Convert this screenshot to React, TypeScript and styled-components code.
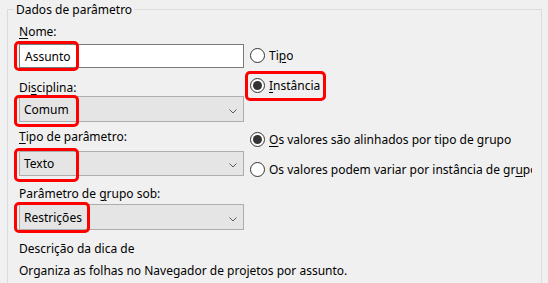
import styled, { createGlobalStyle } from "styled-components";

const GlobalStyle = createGlobalStyle`
  html, body {
    margin: 0;
    padding: 0;
    background: #f0f0f0;
  }
  body {
    width: 548px;
    height: 283px;
    overflow: hidden;
    font-family: "Noto Sans", "Segoe UI", sans-serif;
    font-size: 12px;
    color: #000;
  }
  u {
    text-decoration-thickness: 1px;
    text-underline-offset: 2px;
  }
`;

// the group box runs on past the bottom of the window, so no bottom edge
const Group = styled.fieldset`
  margin: 2px 0 0 7px;
  width: 535px;
  min-inline-size: 0;
  height: 281px;
  box-sizing: border-box;
  border: 1px solid #dcdcdc;
  border-bottom: none;
  padding: 0 0 0 11px;
  overflow: hidden;
`;

const Legend = styled.legend`
  margin-left: -5px;
  padding: 0 2px;
  line-height: 15px;
`;

const Columns = styled.div`
  display: flex;
  gap: 1px;
  width: 100%;
  min-width: 0;
`;

const LeftCol = styled.div`
  width: 225px;
  flex: none;
  display: flex;
  flex-direction: column;
`;

// clips the long radio label the way the dialog does
const RightCol = styled.div`
  flex: 1 1 0;
  width: 0;
  min-width: 0;
  margin-right: 9px;
  padding-left: 5px;
  overflow: hidden;
  display: flex;
  flex-direction: column;
`;

const Label = styled.div<{ $top: number }>`
  margin-top: ${(p) => p.$top}px;
  line-height: 15px;
  height: 15px;
  white-space: nowrap;
`;

const Field = styled.div<{ $top: number }>`
  position: relative;
  margin-top: ${(p) => p.$top}px;
`;

const TextBox = styled.div`
  height: 24px;
  box-sizing: border-box;
  border: 1px solid #7a7a7a;
  background: #fff;
  padding-left: 5px;
  display: flex;
  align-items: center;
`;

const Combo = styled.div<{ $h: number }>`
  height: ${(p) => p.$h}px;
  box-sizing: border-box;
  border: 1px solid #adadad;
  background: #e5e5e5;
  padding: 0 6px 0 4px;
  display: flex;
  align-items: center;
  justify-content: space-between;
`;

const Chevron = styled.svg`
  margin-top: 4px;
`;

const Highlight = styled.div<{ $x: number; $y: number; $w: number; $h: number }>`
  position: absolute;
  left: ${(p) => p.$x}px;
  top: ${(p) => p.$y}px;
  width: ${(p) => p.$w}px;
  height: ${(p) => p.$h}px;
  box-sizing: border-box;
  border: 3px solid #f00;
  border-radius: 5px;
  pointer-events: none;
`;

const RadioRow = styled.div<{ $top: number }>`
  position: relative;
  margin-top: ${(p) => p.$top}px;
  height: 17px;
  min-width: 0;
  display: flex;
  align-items: center;
  gap: 4px;
`;

const Circle = styled.span<{ $on?: boolean }>`
  flex: none;
  width: 15px;
  height: 15px;
  box-sizing: border-box;
  border: 1px solid #333;
  border-radius: 50%;
  background: #fff;
  display: flex;
  align-items: center;
  justify-content: center;
  &::after {
    content: "";
    width: 9px;
    height: 9px;
    border-radius: 50%;
    background: ${(p) => (p.$on ? "#333" : "transparent")};
  }
`;

const RadioText = styled.span`
  flex: 0 1 auto;
  min-width: 0;
  overflow: hidden;
  text-overflow: clip;
  white-space: nowrap;
  line-height: 15px;
`;

const Description = styled.div`
  display: flex;
  flex-direction: column;
`;

const ComboBox = ({ value, h }: { value: string; h: number }) => (
  <Combo $h={h}>
    <span>{value}</span>
    <Chevron width="8" height="5" viewBox="0 0 8 5">
      <polyline points="0.5,0.5 4,4 7.5,0.5" fill="none" stroke="#5a5a5a" strokeWidth="1" />
    </Chevron>
  </Combo>
);

export default function App() {
  return (
    <>
      <GlobalStyle />
      <Group>
        <Legend>Dados de parâmetro</Legend>
        <Columns>
          <LeftCol>
            <Label $top={7}>
              <u>N</u>ome:
            </Label>
            <Field $top={5}>
              <TextBox>Assunto</TextBox>
              <Highlight $x={-5} $y={-3} $w={65} $h={30} />
            </Field>
            <Label $top={12}>
              Di<u>s</u>ciplina:
            </Label>
            <Field $top={1}>
              <ComboBox value="Comum" h={26} />
              <Highlight $x={-5} $y={-1} $w={65} $h={32} />
            </Field>
            <Label $top={7}>
              <u>T</u>ipo de parâmetro:
            </Label>
            <Field $top={7}>
              <ComboBox value="Texto" h={25} />
              <Highlight $x={-5} $y={-3} $w={65} $h={34} />
            </Field>
            <Label $top={10}>
              Parâmetro de <u>g</u>rupo sob:
            </Label>
            <Field $top={3}>
              <ComboBox value="Restrições" h={26} />
              <Highlight $x={-5} $y={-2} $w={76} $h={31} />
            </Field>
          </LeftCol>
          <RightCol>
            <RadioRow $top={30}>
              <Circle />
              <RadioText>
                Ti<u>p</u>o
              </RadioText>
            </RadioRow>
            <RadioRow $top={13}>
              <Circle $on />
              <RadioText>
                <u>I</u>nstância
              </RadioText>
              <Highlight $x={-5} $y={-6} $w={81} $h={30} />
            </RadioRow>
            <RadioRow $top={37}>
              <Circle $on />
              <RadioText>
                <u>O</u>s valores são alinhados por tipo de grupo
              </RadioText>
            </RadioRow>
            <RadioRow $top={13}>
              <Circle />
              <RadioText>
                Os valores podem variar por instância de gr<u>u</u>po
              </RadioText>
            </RadioRow>
          </RightCol>
        </Columns>
        <Description>
          <Label $top={11}>Descrição da dica de</Label>
          <Label $top={7}>Organiza as folhas no Navegador de projetos por assunto.</Label>
        </Description>
      </Group>
    </>
  );
}
